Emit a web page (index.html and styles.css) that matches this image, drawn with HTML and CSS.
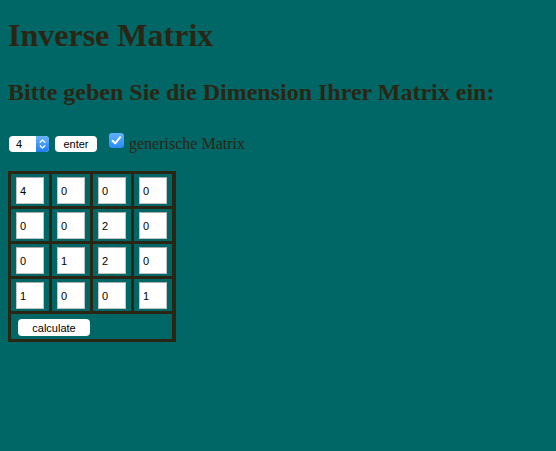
FILE: index.html
```html
<!DOCTYPE html>
<html lang="de">
<head>
<meta charset="utf-8">
<title>Inverse Matrix</title>
<link rel="stylesheet" href="styles.css">
</head>
<body>
<h1 class="title">Inverse Matrix</h1>
<h2 class="prompt">Bitte geben Sie die Dimension Ihrer Matrix ein:</h2>
<form class="controls">
  <span class="select-wrap">
    <select class="dim"><option>4</option></select>
    <span class="stepper"><svg width="13" height="16" viewBox="0 0 13 16"><path d="M4.2 6.2 L6.5 3.9 L8.8 6.2 M4.2 9.8 L6.5 12.1 L8.8 9.8" fill="none" stroke="#fff" stroke-width="1.3" stroke-linecap="round" stroke-linejoin="round"/></svg></span>
  </span>
  <button type="button" class="btn enter">enter</button>
  <label class="check">
    <span class="box"><svg width="15" height="15" viewBox="0 0 15 15"><path d="M3.6 7.8 L6.2 10.4 L11.2 4.2" fill="none" stroke="#fff" stroke-width="2" stroke-linecap="round" stroke-linejoin="round"/></svg></span>
    <span class="check-text">generische Matrix</span>
  </label>
</form>
<div class="matrix">
  <div class="cell"><input value="4"></div>
  <div class="cell"><input value="0"></div>
  <div class="cell"><input value="0"></div>
  <div class="cell"><input value="0"></div>
  <div class="cell"><input value="0"></div>
  <div class="cell"><input value="0"></div>
  <div class="cell"><input value="2"></div>
  <div class="cell"><input value="0"></div>
  <div class="cell"><input value="0"></div>
  <div class="cell"><input value="1"></div>
  <div class="cell"><input value="2"></div>
  <div class="cell"><input value="0"></div>
  <div class="cell"><input value="1"></div>
  <div class="cell"><input value="0"></div>
  <div class="cell"><input value="0"></div>
  <div class="cell"><input value="1"></div>
  <div class="cell calc-row"><button type="button" class="btn calc">calculate</button></div>
</div>
</body>
</html>
```
FILE: styles.css
```css
html, body {
  margin: 0;
}
body {
  background: #006666;
  color: #2b2614;
  font-family: "Liberation Serif", "Times New Roman", serif;
  padding: 0 8px;
}
.title {
  font-size: 32px;
  line-height: 37px;
  font-weight: bold;
  margin: 17px 0 0;
}
.prompt {
  font-size: 24px;
  line-height: 28px;
  font-weight: bold;
  margin: 24px 0 0;
}
.controls {
  display: flex;
  align-items: flex-start;
  margin: 27px 0 0;
  height: 19px;
}
.select-wrap {
  position: relative;
  display: block;
  width: 40px;
  height: 16px;
  margin: 3px 0 0 1px;
}
.dim {
  -webkit-appearance: none;
  appearance: none;
  display: block;
  width: 40px;
  height: 16px;
  margin: 0;
  border: none;
  border-radius: 4px;
  background: #fff;
  color: #000;
  font: 11px "Liberation Sans", Arial, sans-serif;
  padding: 0 0 0 7px;
}
.stepper {
  position: absolute;
  right: 0;
  top: 0;
  width: 13px;
  height: 16px;
  border-radius: 0 4px 4px 0;
  background: linear-gradient(#6ab4fc, #1c7ef5);
  display: flex;
  align-items: center;
  justify-content: center;
  pointer-events: none;
}
.btn {
  font: 11px "Liberation Sans", Arial, sans-serif;
  background: #fff;
  color: #000;
  border: none;
  border-radius: 4px;
  padding: 0;
  margin: 0;
}
.enter {
  width: 42px;
  height: 16px;
  margin: 3px 0 0 6px;
}
.check {
  display: flex;
  align-items: flex-start;
  margin-left: 12px;
  font-size: 16px;
  line-height: 16px;
}
.box {
  width: 15px;
  height: 15px;
  border-radius: 3px;
  background: linear-gradient(#62b1fc, #2a8bf6);
  display: flex;
  align-items: center;
  justify-content: center;
}
.check-text {
  margin: 3px 0 0 5px;
}
.matrix {
  display: grid;
  grid-template-columns: repeat(4, 38px);
  grid-template-rows: repeat(4, 32px) 25px;
  gap: 3px;
  padding: 3px 4px 3px 3px;
  background: #2b2614;
  width: max-content;
  margin-top: 19px;
}
.cell {
  background: #006666;
  padding: 3px 5px 2px;
}
.cell input {
  display: block;
  box-sizing: border-box;
  width: 28px;
  height: 27px;
  margin: 0;
  padding: 0 3px;
  border: 1px solid #c4c4c4;
  border-top-color: #a9a9a9;
  background: #fff;
  color: #000;
  font: 11px "Liberation Sans", Arial, sans-serif;
}
.calc-row {
  grid-column: 1 / -1;
  padding: 5px 0 0 7px;
}
.calc {
  display: block;
  width: 72px;
  height: 17px;
}
```
